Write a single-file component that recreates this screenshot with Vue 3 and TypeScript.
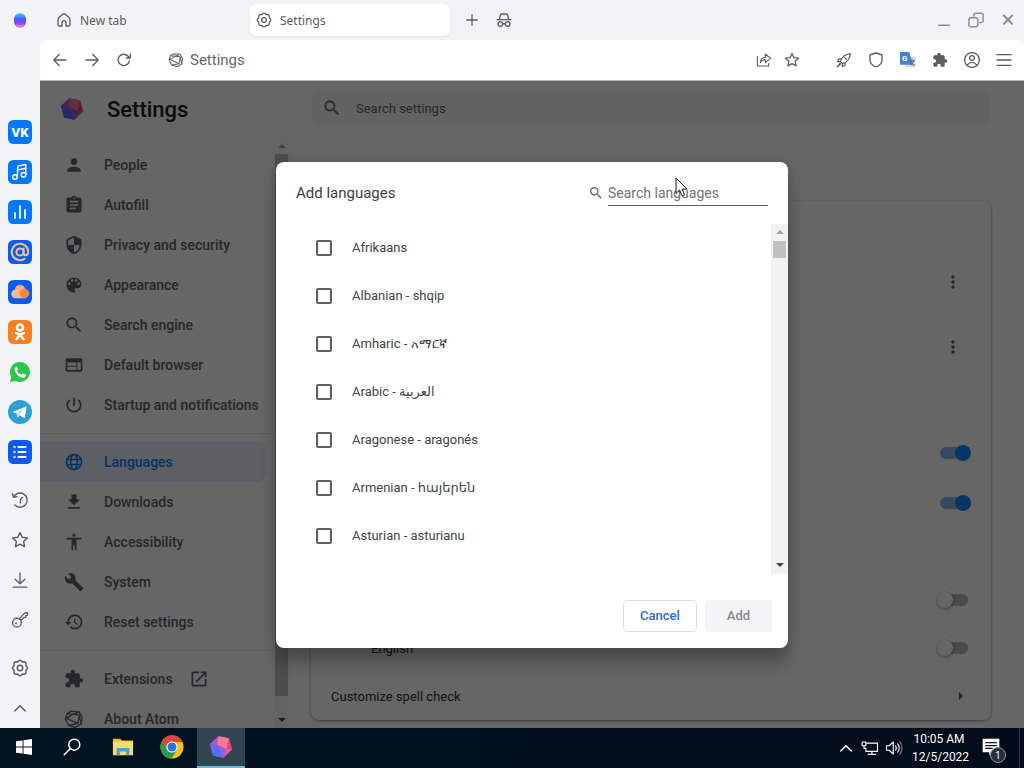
<script setup lang="ts">
import { ref } from 'vue'

interface IconButton { name: string; label: string }
interface Language { label: string; checked: boolean }

const fill = (d: string) => `<path fill="currentColor" d="${d}"/>`
const line = (body: string, width = 1.5) =>
  `<g fill="none" stroke="currentColor" stroke-width="${width}" stroke-linecap="round" stroke-linejoin="round">${body}</g>`
const tile = (color: string, body: string) => `<rect width="24" height="24" rx="5.5" fill="${color}"/>${body}`

const gear = line('<path d="M10 2.6 Q12 .8 14 2.6 L15.2 4 L17.3 3.7 Q20 4 20 6.8 L19.8 8.7 L21.2 10.2 Q22.9 12 21.2 13.8 L19.8 15.3 L20 17.2 Q20 20 17.3 20.3 L15.2 20 L14 21.4 Q12 23.2 10 21.4 L8.8 20 L6.7 20.3 Q4 20 4 17.2 L4.2 15.3 L2.8 13.8 Q1.1 12 2.8 10.2 L4.2 8.7 L4 6.8 Q4 4 6.7 3.7 L8.8 4 Z"/><circle cx="12" cy="12" r="3.6"/>', 1.9)
const star = line('<path d="M12 2.200l3 6.200 6.800.9-5 4.700 1.300 6.800-6.100-3.300-6.100 3.300 1.300-6.800-5-4.700 6.800-.9z"/>', 1.9)
const extension = fill('M20.5 11H19V7c0-1.1-.9-2-2-2h-4V3.5C13 2.12 11.88 1 10.5 1S8 2.12 8 3.5V5H4c-1.1 0-1.99.9-1.99 2v3.8H3.5c1.49 0 2.7 1.21 2.7 2.7s-1.21 2.7-2.7 2.7H2V20c0 1.1.9 2 2 2h3.8v-1.5c0-1.49 1.21-2.7 2.7-2.7 1.49 0 2.7 1.21 2.7 2.7V22H17c1.1 0 2-.9 2-2v-4h1.5c1.38 0 2.5-1.12 2.5-2.5S21.88 11 20.5 11z')

const gem = `
  <path fill="#dd6092" d="M9.5 1.2 20 3.2 23 14.5 14.5 22.8 4 20.5 1 9z"/>
  <path fill="#f77b91" d="M9.5 1.2 20 3.2 17.5 14 8 9.5z"/>
  <path fill="#b451d8" d="M1 9 9.5 1.2 8 9.5 5 15z"/>
  <path fill="#7664f2" d="M1 9 8 9.5 8.5 20 4 20.5z"/>
  <path fill="#4d70f8" d="M8 9.5 4 20.5 14.5 22.8z"/>
  <path fill="#a15adf" d="M8 9.5 17.5 14 14.5 22.8z"/>
  <path fill="#e0457e" d="M20 3.2 23 14.5 17.5 14z"/>`

const icons: Record<string, string> = {
  gear, star, extension, gem,
  home: line('<path d="M9 21H5.5A2.5 2.5 0 0 1 3 18.5V11c0-1 .4-1.800 1.200-2.500L10 3.300a3 3 0 0 1 4 0l5.800 5.200c.8.7 1.200 1.500 1.200 2.500v7.500a2.500 2.500 0 0 1-2.500 2.500H15v-5a3 3 0 0 0-6 0z"/>', 2),
  plus: line('<path d="M12 3v18M3 12h18"/>', 2.2),
  incognito: line('<path d="M5 11.500 6.300 5A2.500 2.500 0 0 1 8.800 3h6.400a2.500 2.500 0 0 1 2.500 2l1.300 6.500M1.500 11.500h21M10.500 18a2 2 0 0 1 3 0"/><circle cx="6.500" cy="18" r="3.500"/><circle cx="17.500" cy="18" r="3.500"/>', 2),
  back: line('<path d="M21 12H3M11 3.500 2.800 12l8.200 8.500"/>', 2),
  forward: line('<path d="M3 12h18M13 3.500l8.200 8.500-8.200 8.500"/>', 2),
  reload: line('<path d="M20 13.500A8.500 8.500 0 1 1 17.800 6l3 3M21.500 3v6h-6"/>', 2),
  atom: line('<path d="M9 2.500 18 3.500 22 10 20.500 18 13.500 22 5.500 19.500 1.800 12.500 3.500 5.500Z"/><path d="M3.500 5.500 18.500 7 16.500 17.500 5.500 19.500M3 11 9.500 7 18 3.500M3 11 16.500 17.500M18.500 7 20.500 18"/>', 1.6),
  share: line('<path d="M2 7v14h17v-4M14 8V3l8 6.500-8 6.500v-4.500c-3.500 0-6 1.500-7.500 4.500 0-4.500 2.500-8 7.500-8z"/>', 1.700),
  rocket: line('<path d="M6.500 14.500C8.500 8 13 3.500 21.500 2.500 21 11 16 15.500 9.500 17.500zM8.500 10.500 4.500 10 2 14.500l5-.5M13.500 15.500l.5 4-4.500 2.500.5-5M6 17l-4 5 5-4M13 8.500l2.500 2.500"/>', 1.8),
  shield: line('<path d="M12 1.500 21 4.500v7.500c0 5.500-4 8.500-9 10.500C7 20.500 3 17.500 3 12V4.500z"/>', 2),
  translate: '<rect x="8" y="7" width="15" height="16" rx="1" fill="#cfd6df"/><path fill="#477ddd" d="M0 0h14l5 19H0z"/><text x="3" y="14" font-size="12" font-weight="700" fill="#fff" font-family="Roboto, sans-serif">G</text><path d="M14 13h8M18 11v2m3 0q-1.500 4-5 6m0-4 6 5" fill="none" stroke="#4a6484" stroke-width="1.600"/>',
  profile: line('<circle cx="12" cy="12" r="11"/><circle cx="12" cy="9" r="3.500"/><path d="M5 19.500q2.500-4 7-4t7 4"/>', 2),
  menu: line('<path d="M1.500 4h21M1.500 12h21M1.500 20h21"/>', 1.900),
  minimize: line('<path d="M5 19h14"/>', 1.900),
  restoreWindow: line('<rect x="2.500" y="9" width="12" height="12" rx="3"/><path d="M9 7V5.500A2.500 2.500 0 0 1 11.500 3H19a2.500 2.500 0 0 1 2.500 2.500V13a2.500 2.500 0 0 1-2.500 2.500h-2"/>', 1.900),
  close: line('<path d="M6.500 6l11 11M17.500 6l-11 11"/>', 2.500),
  vk: tile('#07f', '<text x="12" y="16.500" text-anchor="middle" font-size="13" font-weight="900" fill="#fff" font-family="Roboto, sans-serif">VK</text>'),
  music: tile('#07f', '<g fill="none" stroke="#fff" stroke-width="1.500" stroke-linejoin="round"><circle cx="7" cy="17" r="2.300"/><circle cx="15.500" cy="14.700" r="2.300"/><path d="M9.300 17 9.700 7.500Q9.800 6 11 5.800l6.800-1.200v10M9.600 10l8.200-1.700"/></g>'),
  chart: tile('#07f', '<path d="M7 13v5M12 6v12M17 10v8" stroke="#fff" stroke-width="1.800" stroke-linecap="round"/>'),
  mail: tile('#0a5cf0', '<g fill="none" stroke="#f1c084" stroke-width="2" stroke-linecap="round"><circle cx="12" cy="12" r="3.600"/><path d="M15.600 8.500v4.700c0 3 4.600 2.800 4.600-1.200A8.200 8.200 0 1 0 16.500 18.800"/></g>'),
  cloud: tile('#0a5cf0', '<circle cx="12" cy="10" r="5.200" fill="#ffae75"/><circle cx="7.500" cy="14" r="4.200" fill="#f3c09b"/><rect x="6" y="12" width="13" height="6.200" rx="3" fill="#ffb27c"/><circle cx="16.500" cy="13.500" r="4.700" fill="#ff8640"/>'),
  ok: tile('#f58220', '<g fill="none" stroke="#fff" stroke-width="2.500" stroke-linecap="round"><circle cx="12" cy="7.500" r="3"/><path d="M8 13q4 2.600 8 0M12 15l-3.500 4M12 15l3.500 4"/></g>'),
  whatsapp: '<path fill="#2fc64f" d="M12 2a10 10 0 1 1-4.600 18.900L2 22l1.300-5A10 10 0 0 1 12 2z"/><path fill="#fff" d="M8.500 6.500 7 7.700c-1.200 2 1 5.700 3.200 7.700 2.300 2 5 3 6.600 1.800l1-1.500q.2-.7-.5-1.100l-2.300-1.200q-.6-.2-1 .3l-.9 1.100q-3-1.300-4.300-4.100l.9-1.100q.4-.4.1-1L9 6.700z"/>',
  telegram: '<circle cx="12" cy="12" r="12" fill="#2d9fd4"/><path fill="#fff" d="M4.500 12 18.800 6.200 16.500 18.500 11.700 15.200 9.500 17.500 8.700 13.500z"/><path d="m9 13.500 7-5.500-4.300 6.500-2.200 3" fill="#b9dced"/>',
  list: tile('#0a5cf0', '<path d="M10.500 7h7M10.500 12h7M10.500 17h7" stroke="#fff" stroke-width="2" stroke-linecap="round"/><path d="M6.500 7h.1M6.500 12h.1M6.500 17h.1" stroke="#f1c084" stroke-width="2.600" stroke-linecap="round"/>'),
  history: line('<path d="M3.500 8A9.500 9.500 0 1 1 5 18.500M2 3.500 3.300 8.300 8 7.500M15.500 8.500Q12 9.500 12.500 16"/>', 1.800),
  download: line('<path d="M12 2.500v14M5.500 11l6.500 6 6.500-6M3 21.500h18"/>', 1.800),
  key: line('<circle cx="8" cy="15.500" r="5.800"/><path d="M11 10.500 18.500 2.500 21.800 2.200 22 5.500l-2 .3-.2 2.400-2.300.4-4.300 4.200"/><path d="M6.500 16.500h.2" stroke-width="2.500"/>', 1.800),
  chevronUp: line('<path d="M5 16 12 9l7 7"/>', 2),
  search: fill('M15.500 14h-.79l-.28-.27C15.410 12.590 16 11.110 16 9.500 16 5.910 13.090 3 9.500 3S3 5.910 3 9.500 5.910 16 9.500 16c1.610 0 3.090-.59 4.230-1.570l.27.28v.79l5 4.990L20.490 19l-4.990-5zm-6 0C7.010 14 5 11.990 5 9.500S7.010 5 9.500 5 14 7.010 14 9.500 11.990 14 9.500 14z'),
  person: fill('M12 12c2.210 0 4-1.790 4-4s-1.790-4-4-4-4 1.790-4 4 1.790 4 4 4zm0 2c-2.670 0-8 1.340-8 4v2h16v-2c0-2.660-5.330-4-8-4z'),
  autofill: fill('M19 3h-4.180C14.400 1.840 13.300 1 12 1c-1.300 0-2.400.84-2.820 2H5c-1.100 0-2 .9-2 2v14c0 1.100.9 2 2 2h14c1.100 0 2-.9 2-2V5c0-1.100-.9-2-2-2zm-7 0c.55 0 1 .45 1 1s-.45 1-1 1-1-.45-1-1 .45-1 1-1zm2 14H7v-2h7v2zm3-4H7v-2h10v2zm0-4H7V7h10v2z'),
  privacy: fill('M12 1L3 5v6c0 5.550 3.840 10.740 9 12 5.160-1.260 9-6.450 9-12V5l-9-4zm0 10.990h7c-.53 4.120-3.280 7.790-7 8.940V12H5V6.300l7-3.110v8.800z'),
  palette: fill('M12 3c-4.970 0-9 4.030-9 9s4.030 9 9 9c.83 0 1.500-.67 1.500-1.500 0-.39-.15-.74-.39-1.010-.23-.26-.38-.61-.38-.99 0-.83.67-1.500 1.500-1.500H16c2.760 0 5-2.240 5-5 0-4.420-4.030-8-9-8zm-5.500 9c-.83 0-1.500-.67-1.500-1.500S5.670 9 6.500 9 8 9.670 8 10.500 7.330 12 6.500 12zm3-4C8.670 8 8 7.330 8 6.500S8.670 5 9.500 5s1.500.67 1.500 1.500S10.330 8 9.500 8zm5 0c-.83 0-1.500-.67-1.500-1.500S13.670 5 14.500 5s1.500.67 1.500 1.500S15.330 8 14.500 8zm3 4c-.83 0-1.500-.67-1.500-1.500S16.670 9 17.500 9s1.500.67 1.500 1.500-.67 1.500-1.500 1.500z'),
  browser: fill('M20 4H4c-1.100 0-1.990.9-1.990 2L2 18c0 1.100.9 2 2 2h16c1.100 0 2-.9 2-2V6c0-1.100-.9-2-2-2zm-5 14H4v-4h11v4zm0-5H4V9h11v4zm5 5h-4V9h4v9z'),
  power: fill('M13 3h-2v10h2V3zm4.830 2.170l-1.420 1.420C17.990 7.860 19 9.810 19 12c0 3.870-3.130 7-7 7s-7-3.130-7-7c0-2.190 1.010-4.140 2.580-5.420L6.170 5.170C4.230 6.820 3 9.260 3 12c0 4.970 4.030 9 9 9s9-4.030 9-9c0-2.740-1.230-5.180-3.170-6.830z'),
  globe: line('<circle cx="12" cy="12" r="9"/><ellipse cx="12" cy="12" rx="4" ry="9"/><path d="M4 9h16M4 15h16"/>', 2),
  downloads: fill('M19 9h-4V3H9v6H5l7 7 7-7zM5 18v2h14v-2H5z'),
  accessibility: fill('M12 2c1.100 0 2 .9 2 2s-.9 2-2 2-2-.9-2-2 .9-2 2-2zm9 7h-6v13h-2v-6h-2v6H9V9H3V7h18v2z'),
  wrench: fill('M22.700 19l-9.100-9.100c.9-2.300.4-5-1.500-6.900-2-2-5-2.400-7.400-1.300L9 6 6 9 1.600 4.700C.4 7.100.9 10.100 2.900 12.100c1.900 1.900 4.600 2.400 6.900 1.500l9.100 9.100c.4.4 1 .4 1.400 0l2.300-2.300c.5-.4.5-1.100.1-1.400z'),
  reset: fill('M13 3c-4.970 0-9 4.030-9 9H1l3.890 3.890.07.14L9 12H6c0-3.870 3.130-7 7-7s7 3.130 7 7-3.130 7-7 7c-1.930 0-3.680-.79-4.940-2.060l-1.420 1.420C8.270 19.990 10.510 21 13 21c4.970 0 9-4.030 9-9s-4.030-9-9-9zm-1 5v5l4.280 2.540.72-1.210-3.500-2.080V8H12z'),
  external: fill('M19 19H5V5h7V3H5c-1.110 0-2 .9-2 2v14c0 1.100.89 2 2 2h14c1.100 0 2-.9 2-2v-7h-2v7zM14 3v2h3.590l-9.830 9.830 1.410 1.410L19 6.410V10h2V3h-7z'),
  more: fill('M12 8c1.100 0 2-.9 2-2s-.9-2-2-2-2 .9-2 2 .9 2 2 2zm0 2c-1.100 0-2 .9-2 2s.9 2 2 2 2-.9 2-2-.9-2-2-2zm0 6c-1.100 0-2 .9-2 2s.9 2 2 2 2-.9 2-2-.9-2-2-2z'),
  arrowRight: fill('M9 6l6 6-6 6z'),
  windows: fill('M4 6.300 10.600 5.400V11.500H4zM11.500 5.300 20 4v7.500h-8.500zM4 12.400h6.600v6.200L4 17.700zM11.500 12.400H20V20l-8.500-1.200z'),
  taskSearch: line('<circle cx="14.500" cy="9.500" r="6"/><path d="M10 14 3.500 20.500"/>', 1.600),
  folder: '<path fill="#e9b93c" d="M1 3h8l2 2h12v4H1z"/><path fill="#fbdc70" d="M1 6h22v15H1z"/><path fill="#4b9fd3" d="M5 13h14v8h-3.500v-4h-7v4H5z"/>',
  chrome: '<circle cx="12" cy="12" r="11.500" fill="#fbc116"/><path fill="#279b50" d="M2 6.300A11.500 11.500 0 0 0 11.500 23.500L17 14.900 7 14.500z"/><path fill="#e0453a" d="M2 6.300A11.500 11.500 0 0 1 22.500 7H12L7 14.500z"/><circle cx="12" cy="12" r="5.600" fill="#fff"/><circle cx="12" cy="12" r="4.500" fill="#2b72e0"/>',
  network: line('<path d="M8 5.500h14v11H6.500V12M14.500 16.500v4M9.500 20.500h10M1.500 4h5v5h-5zM4 9v3.500h2.500"/>', 1.500),
  volume: line('<path d="M2 9h3.500L11 4v16l-5.500-5H2zM14 9q2.200 3 0 6M17 6.500q4 5.500 0 11"/><path d="M20 4q5.500 8 0 16" opacity=".5"/>', 1.500),
}

const rail: IconButton[][] = [
  [
    { name: 'vk', label: 'VK' }, { name: 'music', label: 'Music' }, { name: 'chart', label: 'Charts' },
    { name: 'mail', label: 'Mail' }, { name: 'cloud', label: 'Cloud' }, { name: 'ok', label: 'OK' },
    { name: 'whatsapp', label: 'WhatsApp' }, { name: 'telegram', label: 'Telegram' }, { name: 'list', label: 'List' },
  ],
  [
    { name: 'history', label: 'History' }, { name: 'star', label: 'Bookmarks' },
    { name: 'download', label: 'Downloads' }, { name: 'key', label: 'Passwords' },
  ],
  [{ name: 'gear', label: 'Settings' }, { name: 'chevronUp', label: 'Collapse' }],
]
const navButtons: IconButton[] = [
  { name: 'back', label: 'Back' }, { name: 'forward', label: 'Forward' }, { name: 'reload', label: 'Reload' },
]
const toolButtons: IconButton[] = [
  { name: 'rocket', label: 'Boost' }, { name: 'shield', label: 'Protection' }, { name: 'translate', label: 'Translate' },
  { name: 'extension', label: 'Extensions' }, { name: 'profile', label: 'Profile' }, { name: 'menu', label: 'Menu' },
]
const windowButtons: IconButton[] = [
  { name: 'minimize', label: 'Minimize' }, { name: 'restoreWindow', label: 'Restore' }, { name: 'close', label: 'Close' },
]
const menu: IconButton[][] = [
  [
    { name: 'person', label: 'People' }, { name: 'autofill', label: 'Autofill' },
    { name: 'privacy', label: 'Privacy and security' }, { name: 'palette', label: 'Appearance' },
    { name: 'search', label: 'Search engine' }, { name: 'browser', label: 'Default browser' },
    { name: 'power', label: 'Startup and notifications' },
  ],
  [
    { name: 'globe', label: 'Languages' }, { name: 'downloads', label: 'Downloads' },
    { name: 'accessibility', label: 'Accessibility' }, { name: 'wrench', label: 'System' },
    { name: 'reset', label: 'Reset settings' },
  ],
  [{ name: 'extension', label: 'Extensions' }, { name: 'atom', label: 'About Atom' }],
]
const taskApps: IconButton[] = [
  { name: 'windows', label: 'Start' }, { name: 'taskSearch', label: 'Search' }, { name: 'folder', label: 'File Explorer' },
  { name: 'chrome', label: 'Chrome' }, { name: 'gem', label: 'Atom' },
]

const languages = ref<Language[]>([
  'Afrikaans', 'Albanian - shqip', 'Amharic - አማርኛ', 'Arabic - العربية',
  'Aragonese - aragonés', 'Armenian - հայերեն', 'Asturian - asturianu',
].map(label => ({ label, checked: false })))
const query = ref('')
</script>

<template>
  <div class="desktop">
    <div class="browser">
      <header class="tabbar">
        <div class="brand"><span class="blob"></span></div>
        <button class="tab"><svg viewBox="0 0 24 24" v-html="icons.home"></svg>New tab</button>
        <button class="tab current"><svg viewBox="0 0 24 24" v-html="icons.gear"></svg>Settings</button>
        <div class="tab-tools">
          <button class="icon small" aria-label="Open tab"><svg viewBox="0 0 24 24" v-html="icons.plus"></svg></button>
          <button class="icon" aria-label="Incognito"><svg viewBox="0 0 24 24" v-html="icons.incognito"></svg></button>
        </div>
        <div class="window-tools">
          <button v-for="b in windowButtons" :key="b.name" class="icon" :class="b.name" :aria-label="b.label">
            <svg viewBox="0 0 24 24" v-html="icons[b.name]"></svg>
          </button>
        </div>
      </header>

      <div class="body">
        <aside class="rail">
          <div v-for="(group, g) in rail" :key="g" class="rail-group">
            <button v-for="b in group" :key="b.name" :class="{ app: g === 0 }" :aria-label="b.label">
              <svg viewBox="0 0 24 24" v-html="icons[b.name]"></svg>
            </button>
          </div>
        </aside>

        <div class="content">
          <div class="toolbar">
            <button v-for="b in navButtons" :key="b.name" class="icon" :aria-label="b.label">
              <svg viewBox="0 0 24 24" v-html="icons[b.name]"></svg>
            </button>
            <div class="address"><svg viewBox="0 0 24 24" v-html="icons.atom"></svg><span>Settings</span></div>
            <div class="page-tools">
              <button class="icon" aria-label="Share"><svg viewBox="0 0 24 24" v-html="icons.share"></svg></button>
              <button class="icon" aria-label="Bookmark"><svg viewBox="0 0 24 24" v-html="icons.star"></svg></button>
            </div>
            <button v-for="b in toolButtons" :key="b.name" class="icon tool" :aria-label="b.label">
              <svg viewBox="0 0 24 24" v-html="icons[b.name]"></svg>
            </button>
          </div>

          <div class="page">
            <div class="page-head">
              <svg class="logo" viewBox="0 0 24 24" v-html="icons.gem"></svg>
              <h1>Settings</h1>
              <label class="page-search">
                <svg viewBox="0 0 24 24" v-html="icons.search"></svg>
                <input type="search" placeholder="Search settings" />
              </label>
            </div>
            <div class="page-body">
              <nav class="menu">
                <div v-for="(group, g) in menu" :key="g" class="menu-group">
                  <a v-for="m in group" :key="m.name" href="#" :class="{ selected: m.name === 'globe' }">
                    <svg viewBox="0 0 24 24" v-html="icons[m.name]"></svg>
                    {{ m.label }}
                    <svg v-if="m.name === 'extension'" class="external" viewBox="0 0 24 24" v-html="icons.external"></svg>
                  </a>
                </div>
              </nav>
              <div class="scrollbar menu-bar"><i class="up"></i><b></b><i class="down"></i></div>
              <main>
                <section class="card">
                  <div class="row tall"><button class="icon wide" aria-label="More actions"><svg viewBox="0 0 24 24" v-html="icons.more"></svg></button></div>
                  <div class="row tall"><button class="icon wide" aria-label="More actions"><svg viewBox="0 0 24 24" v-html="icons.more"></svg></button></div>
                  <div class="row"></div>
                  <div class="row lined"><input class="toggle" type="checkbox" checked aria-label="Translate pages" /></div>
                  <div class="row lined"><input class="toggle" type="checkbox" checked aria-label="Spell check" /></div>
                  <div class="row"></div>
                  <div class="row"><input class="toggle" type="checkbox" aria-label="Spell check language" /></div>
                  <div class="row"><label class="indent" for="english">English</label><input id="english" class="toggle" type="checkbox" /></div>
                  <div class="row"><span>Customize spell check</span><button class="icon" aria-label="Open spell check"><svg viewBox="0 0 24 24" v-html="icons.arrowRight"></svg></button></div>
                </section>
              </main>
            </div>

            <div class="scrim">
              <div class="dialog" role="dialog" aria-labelledby="dialog-title">
                <div class="dialog-head">
                  <h2 id="dialog-title">Add languages</h2>
                  <label class="dialog-search">
                    <svg viewBox="0 0 24 24" v-html="icons.search"></svg>
                    <input v-model="query" type="search" placeholder="Search languages" />
                  </label>
                </div>
                <div class="list">
                  <div class="options">
                    <label v-for="l in languages" :key="l.label"><input v-model="l.checked" type="checkbox" />{{ l.label }}</label>
                  </div>
                  <div class="scrollbar"><i class="up"></i><b></b><i class="down"></i></div>
                </div>
                <div class="actions">
                  <button class="cancel">Cancel</button>
                  <button class="add" disabled>Add</button>
                </div>
                <svg class="pointer" viewBox="0 0 13 20"><path d="M1 1v15.500l3.600-3.500 2.500 5.800 2.500-1.100-2.500-5.600h5z" fill="#fff" stroke="#111" /></svg>
              </div>
            </div>
          </div>
        </div>
      </div>
    </div>

    <footer class="taskbar">
      <button v-for="a in taskApps" :key="a.name" class="task" :class="[a.name, { active: a.name === 'gem' }]" :aria-label="a.label">
        <svg viewBox="0 0 24 24" v-html="icons[a.name]"></svg>
      </button>
      <div class="tray">
        <svg class="tray-up" viewBox="0 0 24 24" v-html="icons.chevronUp"></svg>
        <svg viewBox="0 0 24 24" v-html="icons.network"></svg>
        <svg viewBox="0 0 24 24" v-html="icons.volume"></svg>
        <div class="clock"><span>10:05 AM</span><span>12/5/2022</span></div>
        <button class="notes" aria-label="Notifications">
          <svg viewBox="0 0 24 24"><path fill="#fff" d="M2 1h20v16h-8l-4 4v-4H2z" /><path d="M5 5.500h14M5 9h14M5 12.500h9" stroke="#06131f" stroke-width="1.500" /></svg>
          <em>1</em>
        </button>
      </div>
    </footer>
  </div>
</template>

<style>
body { margin: 0; }
</style>

<style scoped>
* { box-sizing: border-box; }
.desktop { display: flex; flex-direction: column; height: 100vh; min-height: 600px; overflow: hidden; font-family: Roboto, "Noto Sans", "DejaVu Sans", sans-serif; font-size: 13px; color: #202124; }
button { border: 0; padding: 0; background: none; font: inherit; color: inherit; }
input { font: inherit; color: inherit; }
svg { display: block; flex: none; }
.browser { flex: 1; min-height: 0; display: flex; flex-direction: column; background: #f2f3f5; }
.icon { width: 32px; height: 32px; display: flex; align-items: center; justify-content: center; color: #5b5d61; flex: none; }
.icon svg { width: 18px; height: 18px; }

.tabbar { height: 40px; display: flex; align-items: center; flex: none; }
.brand { width: 40px; display: flex; justify-content: center; }
.blob { width: 12px; height: 15px; border-radius: 6px; background: linear-gradient(#4fd0f4, #3f5cff 40%, #9646f2 70%, #f59ac8); }
.tab { width: 200px; height: 32px; margin-left: 6px; padding-left: 10px; display: flex; align-items: center; gap: 8px; border-radius: 6px; color: #5b5d61; font: 12px "Noto Sans", "Open Sans", sans-serif; }
.tab svg { width: 16px; height: 16px; }
.tab.current { margin-left: 4px; padding-left: 6px; background: #fff; box-shadow: 0 1px 3px #00000014; }
.tab-tools { display: flex; margin-left: 6px; }
.icon.small svg { width: 14px; height: 14px; }
.tab-tools .icon:last-child svg { width: 16px; height: 16px; }
.window-tools { display: flex; margin-left: auto; }
.window-tools .icon { color: #8a8c90; }

.body { flex: 1; min-height: 0; display: flex; }
.rail { width: 40px; flex: none; padding-top: 72px; display: flex; flex-direction: column; gap: 8px; }
.rail-group { display: flex; flex-direction: column; }
.rail button { height: 40px; display: flex; align-items: center; justify-content: center; color: #5b5d61; }
.rail svg { width: 18px; height: 18px; }
.rail .app svg { width: 24px; height: 24px; }
.content { flex: 1; min-width: 0; display: flex; flex-direction: column; }
.toolbar { height: 41px; flex: none; display: flex; align-items: center; padding: 0 4px; background: #fff; border-radius: 8px 8px 0 0; border-bottom: 1px solid #b8b8b8; }
.toolbar .icon svg { width: 16px; height: 16px; }
.address { flex: 1; display: flex; align-items: center; gap: 6px; padding-left: 28px; font-size: 15px; color: #65676b; }
.address svg { width: 16px; height: 16px; }
.page-tools { display: flex; margin-right: 18px; }
.page-tools .icon { width: 28px; }
.page-tools + .tool { margin-left: 4px; }

.page { flex: 1; min-height: 0; position: relative; display: flex; flex-direction: column; background: #fff; overflow: hidden; }
.page-head { height: 56px; flex: none; display: flex; align-items: center; padding: 0 34px 0 20px; }
.logo { width: 24px; height: 24px; }
h1 { margin: 0 0 0 23px; width: 205px; font-size: 22px; font-weight: 500; color: #202124; }
.page-search { flex: 1; height: 38px; margin-bottom: 2px; display: flex; align-items: center; gap: 14px; padding-left: 10px; border-radius: 8px; background: #f3f8f6; color: #5f6368; }
.page-search svg { width: 20px; height: 20px; }
.page-search input { flex: 1; border: 0; outline: 0; background: none; padding: 0; }
.page-search input::placeholder { color: #5f6368; opacity: 1; }
.page-body { flex: 1; min-height: 0; display: flex; }
.menu { width: 233px; flex: none; padding-top: 8px; overflow: hidden; }
.menu-group + .menu-group { border-top: 1px solid #ebecee; margin-top: 8px; padding-top: 8px; }
.menu a { height: 40px; margin-right: 7px; padding-left: 24px; display: flex; align-items: center; gap: 20px; border-radius: 0 8px 8px 0; color: #5f6368; font-size: 14px; font-weight: 500; text-decoration: none; white-space: nowrap; }
.menu svg { width: 20px; height: 20px; }
.menu .external { margin-left: -4px; }
.menu a.selected { background: #e6effb; color: #1a78ee; }
.scrollbar { width: 17px; flex: none; display: flex; flex-direction: column; align-items: center; background: #f1f1f1; }
.scrollbar i { height: 17px; display: flex; align-items: center; }
.scrollbar i::before { content: ""; border: 4px solid transparent; }
.scrollbar .up::before { border-top: 0; border-bottom-color: #a3a3a3; }
.scrollbar .down::before { border-bottom: 0; border-top-color: #444; }
.scrollbar b { width: 13px; height: 17px; background: #c1c1c1; }
.scrollbar .down { margin-top: auto; }
.menu-bar { background: #fafafa; }
.menu-bar b { flex: 1; margin-bottom: 15px; }
.menu-bar .down { margin-top: 0; }
main { flex: 1; min-width: 0; padding: 64px 33px 0 21px; }
.card { padding-top: 48px; border-radius: 8px; box-shadow: 0 1px 2px #3c404360, 0 1px 3px 1px #3c404326; }
.row { height: 48px; display: flex; align-items: center; justify-content: flex-end; padding: 0 20px; }
.row span, .row label { margin-right: auto; font-size: 13px; color: #303134; }
.row .indent { margin-left: 40px; }
.row.tall { height: 65px; }
.row.tall + .row:not(.tall) { height: 49px; }
.row.lined { height: 50px; }
.row .icon { width: 20px; }
.row .icon.wide { width: 36px; }
.row .icon.wide svg { width: 20px; height: 20px; }
.row .icon svg { width: 16px; height: 16px; }
.toggle { appearance: none; width: 28px; height: 12px; margin: 0 3px 0 0; border-radius: 6px; background: #b8babd; position: relative; }
.toggle::before { content: ""; position: absolute; top: -2px; left: -3px; width: 16px; height: 16px; border-radius: 50%; background: #fff; box-shadow: 0 1px 3px #0006; }
.toggle:checked { background: #8db6ee; }
.toggle:checked::before { left: auto; right: -3px; background: #1a80ff; box-shadow: none; }

.scrim { position: absolute; inset: 0; display: flex; align-items: center; justify-content: center; background: rgba(0, 0, 0, 0.6); }
.dialog { position: relative; width: 512px; max-width: 90%; background: #fff; border-radius: 8px; box-shadow: 0 0 16px #0000001f, 0 16px 16px #0000003d; }
.dialog-head { height: 62px; display: flex; align-items: center; justify-content: space-between; padding: 0 20px; }
h2 { margin: 0; font-size: 15px; font-weight: 400; color: #3c4043; }
.dialog-search { display: flex; align-items: center; gap: 4px; color: #5f6368; }
.dialog-search svg { width: 16px; height: 16px; }
.dialog-search input { width: 160px; height: 26px; padding: 2px 0 0; border: 0; border-bottom: 1px solid #5f6368; outline: 0; background: none; font-size: 14px; }
.dialog-search input::placeholder { color: #6f7377; opacity: 1; }
.list { height: 350px; display: flex; justify-content: space-between; }
.options { flex: 1; overflow: hidden; }
.options label { height: 48px; display: flex; align-items: center; gap: 20px; padding-left: 40px; font-size: 13px; color: #3f4347; }
.options input { appearance: none; width: 16px; height: 16px; margin: 0; border: 2px solid #5f6368; border-radius: 2px; }
.actions { display: flex; justify-content: flex-end; gap: 8px; padding: 26px 16px 16px; }
.actions button { height: 32px; padding: 0 16px; border-radius: 4px; font-weight: 500; }
.actions .cancel { width: 74px; border: 1px solid #dadce0; color: #2a68d0; }
.actions .add { width: 67px; background: #f3f4f5; color: #85898d; }
.pointer { position: absolute; left: 399px; top: 15px; width: 13px; height: 20px; }

.taskbar { height: 40px; flex: none; display: flex; background: linear-gradient(90deg, #01141f, #010c1a); color: #fff; }
.task { width: 48px; display: flex; align-items: center; justify-content: center; border-bottom: 2px solid transparent; margin-right: 1px; }
.task svg { width: 24px; height: 24px; }
.task.windows { margin-right: 0; }
.task.taskSearch { margin-right: 3px; }
.task.taskSearch svg, .task.folder svg { width: 22px; height: 22px; }
.task.active { background: #304550; border-color: #76b5e8; }
.tray { margin-left: auto; display: flex; align-items: center; }
.tray > svg { width: 18px; height: 18px; margin-right: 6px; }
.tray > .tray-up { margin-right: 6px; }
.clock { width: 54px; margin-left: 3px; display: flex; flex-direction: column; text-align: center; font-size: 12px; line-height: 18px; white-space: nowrap; }
.notes { position: relative; width: 45px; height: 40px; margin: 0 4px 0 9px; border-right: 1px solid #2d3a46; padding: 0 8px 0 6px; display: flex; align-items: center; }
.notes svg { width: 20px; height: 20px; }
.notes em { position: absolute; left: 15px; top: 19px; width: 16px; height: 16px; border: 1px solid #8f969c; border-radius: 50%; background: #26313a; font: 11px/14px "Open Sans", sans-serif; text-align: center; }
</style>
